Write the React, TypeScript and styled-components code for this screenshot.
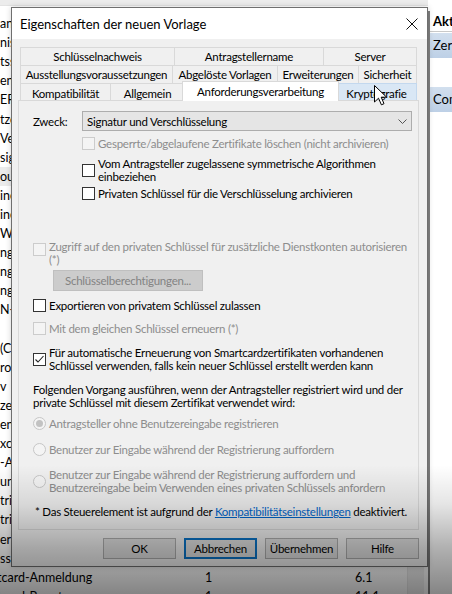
import React from "react";
import styled, { createGlobalStyle } from "styled-components";

const UI_FONT = `Lato, "Liberation Sans", Arial, sans-serif`;

const GlobalStyle = createGlobalStyle`
  * { box-sizing: border-box; }
  html, body { margin: 0; padding: 0; background: #fff; }
  body { font-family: ${UI_FONT}; }
`;

const templates = [
  "an", "nis", "tss", "ent", "EF", "tze", "Ver", "sig", "out", "ine",
  "ine", "Wie", "ng", "ng", "ng", "N-", "", "(C", "ro", "v",
  "ze", "en", "xc", "-A", "un", "tri", "tri", "er (", "ss",
];

const tabRows = [
  [
    { label: "Schlüsselnachweis", width: 155 },
    { label: "Antragstellername", width: 150 },
    { label: "Server", width: 94 },
  ],
  [
    { label: "Ausstellungsvoraussetzungen", width: 153 },
    { label: "Abgelöste Vorlagen", width: 106 },
    { label: "Erweiterungen", width: 82 },
    { label: "Sicherheit", width: 59 },
  ],
];

const App = () => {
  return (
    <>
      <GlobalStyle />
      <Desktop>
        <ListPane>
          <ListHeader />
          <ListBody>
            <Rows>
              {templates.map((name, index) => (
                <ListRow key={index} $hover={index === 8}>
                  <NameCell>{name}</NameCell>
                </ListRow>
              ))}
              <ListRow>
                <NameCell $indent={-3}>tcard-Anmeldung</NameCell>
                <VersionCell>1</VersionCell>
                <Cell>6.1</Cell>
              </ListRow>
              <ListRow>
                <NameCell $indent={-3}>tcard-Benutzer</NameCell>
                <VersionCell>1</VersionCell>
                <Cell>11.1</Cell>
              </ListRow>
            </Rows>
            <Scrollbar />
          </ListBody>
        </ListPane>

        <ActionPane>
          <ActionHeader>Aktionen</ActionHeader>
          <ActionGroup $mt={1}>Zertifikatvorlagen</ActionGroup>
          <ActionGroup $mt={29}>Computer</ActionGroup>
        </ActionPane>

        <Dialog>
          <TitleBar>
            <Title>Eigenschaften der neuen Vorlage</Title>
            <CloseButton>
              <svg width="12" height="12" viewBox="0 0 12 12">
                <path d="M0.5 0.5 L11.5 11.5 M11.5 0.5 L0.5 11.5" stroke="#111" strokeWidth="1" />
              </svg>
            </CloseButton>
          </TitleBar>

          <DialogBody>
            <TabStrip>
              {tabRows.map((row, r) => (
                <TabRow key={r} $first={r === 0}>
                  {row.map((tab, i) => (
                    <Tab key={tab.label} $width={tab.width} $first={i === 0}>
                      {tab.label}
                    </Tab>
                  ))}
                </TabRow>
              ))}
              <TabRow $last>
                <Tab $width={91} $first $bottom>
                  Kompatibilität
                </Tab>
                <Tab $width={75} $bottom>
                  Allgemein
                </Tab>
                <ActiveTab>Anforderungsverarbeitung</ActiveTab>
                <Tab $width={81} $bottom $hover>
                  Kryptografie
                </Tab>
              </TabRow>
            </TabStrip>

            <TabPage>
              <FieldRow>
                <FieldLabel>Zweck:</FieldLabel>
                <Select>
                  <span>Signatur und Verschlüsselung</span>
                  <svg width="9" height="5" viewBox="0 0 9 5">
                    <polyline points="0.5,0.5 4.5,4.5 8.5,0.5" fill="none" stroke="#555" strokeWidth="1" />
                  </svg>
                </Select>
              </FieldRow>

              <Option $mt={6} $indent={49} $disabled>
                <Box $disabled />
                <Label>Gesperrte/abgelaufene Zertifikate löschen (nicht archivieren)</Label>
              </Option>
              <Option $mt={7} $indent={49}>
                <Box />
                <Label>
                  Vom Antragsteller zugelassene symmetrische Algorithmen
                  <br />
                  einbeziehen
                </Label>
              </Option>
              <Option $mt={4} $indent={49}>
                <Box />
                <Label>Privaten Schlüssel für die Verschlüsselung archivieren</Label>
              </Option>

              <Option $mt={40} $disabled $top>
                <Box $disabled $top />
                <Label>
                  Zugriff auf den privaten Schlüssel für zusätzliche Dienstkonten autorisieren
                  <br />
                  (*)
                </Label>
              </Option>
              <KeyButton disabled>Schlüsselberechtigungen...</KeyButton>

              <Option $mt={8}>
                <Box />
                <Label>Exportieren von privatem Schlüssel zulassen</Label>
              </Option>
              <Option $mt={10} $disabled>
                <Box $disabled />
                <Label>Mit dem gleichen Schlüssel erneuern (*)</Label>
              </Option>
              <Option $mt={11}>
                <Box>
                  <svg width="11" height="11" viewBox="0 0 11 11">
                    <polyline points="1.5,5.5 4,8 9.5,2" fill="none" stroke="#222" strokeWidth="1.1" />
                  </svg>
                </Box>
                <Label>
                  Für automatische Erneuerung von Smartcardzertifikaten vorhandenen
                  <br />
                  Schlüssel verwenden, falls kein neuer Schlüssel erstellt werden kann
                </Label>
              </Option>

              <Paragraph>
                Folgenden Vorgang ausführen, wenn der Antragsteller registriert wird und der
                <br />
                private Schlüssel mit diesem Zertifikat verwendet wird:
              </Paragraph>

              <Option $mt={8} $disabled>
                <Radio $checked />
                <Label>Antragsteller ohne Benutzereingabe registrieren</Label>
              </Option>
              <Option $mt={13} $disabled>
                <Radio />
                <Label>Benutzer zur Eingabe während der Registrierung auffordern</Label>
              </Option>
              <Option $mt={12} $disabled>
                <Radio />
                <Label>
                  Benutzer zur Eingabe während der Registrierung auffordern und
                  <br />
                  Benutzereingabe beim Verwenden eines privaten Schlüssels anfordern
                </Label>
              </Option>

              <Footnote>
                * Das Steuerelement ist aufgrund der <Link>Kompatibilitätseinstellungen</Link>{" "}
                deaktiviert.
              </Footnote>
            </TabPage>

            <ButtonBar>
              <DialogButton>OK</DialogButton>
              <DialogButton $default>Abbrechen</DialogButton>
              <DialogButton>Übernehmen</DialogButton>
              <DialogButton>Hilfe</DialogButton>
            </ButtonBar>
          </DialogBody>

          <Cursor width="14" height="21" viewBox="0 0 14 21">
            <path
              d="M0.5 0.5 L0.5 17 L4.5 13.2 L7.4 19.8 L10 18.7 L7.2 12.2 L12.6 12.2 Z"
              fill="#fff"
              stroke="#000"
              strokeWidth="1"
              strokeLinejoin="round"
            />
          </Cursor>
        </Dialog>

        <VideoShade />
      </Desktop>
    </>
  );
};

export default App;

const Desktop = styled.div`
  position: relative;
  display: flex;
  width: 452px;
  height: 594px;
  overflow: hidden;
  background: #fff;
  font-family: ${UI_FONT};
`;

const ListPane = styled.div`
  display: flex;
  flex-direction: column;
  width: 428px;
  flex: none;
`;

const ListHeader = styled.div`
  height: 6px;
  flex: none;
  background: #ececec;
  border-bottom: 1px solid #e3e3e3;
`;

const ListBody = styled.div`
  display: flex;
  flex: 1;
  padding-top: 8px;
`;

const Rows = styled.div`
  flex: 1;
  overflow: hidden;
`;

const ListRow = styled.div<{ $hover?: boolean }>`
  display: flex;
  align-items: center;
  height: 19.1px;
  font-size: 12.5px;
  color: #000;
  white-space: nowrap;
  background: ${(props) => (props.$hover ? "#ebebeb" : "transparent")};
`;

const NameCell = styled.div<{ $indent?: number }>`
  width: 205px;
  flex: none;
  overflow: hidden;
  text-indent: ${(props) => props.$indent ?? 0}px;
`;

const VersionCell = styled.div`
  width: 150px;
  flex: none;
`;

const Cell = styled.div`
  flex: 1;
`;

const Scrollbar = styled.div`
  width: 17px;
  margin-right: 4px;
  background: #f0f0f0;
  border-left: 1px solid #e6e6e6;
`;

const ActionPane = styled.div`
  display: flex;
  flex-direction: column;
  flex: 1;
  margin-top: 11px;
  border-left: 2px solid #7f7f7f;
  background: #fff;
  overflow: hidden;
  white-space: nowrap;
  font-size: 13px;
`;

const ActionHeader = styled.div`
  height: 21px;
  line-height: 21px;
  padding-left: 3px;
  font-weight: bold;
  border-bottom: 1px solid #c9c9c9;
`;

const ActionGroup = styled.div<{ $mt: number }>`
  height: 25px;
  line-height: 25px;
  margin-top: ${(props) => props.$mt}px;
  padding-left: 3px;
  background: linear-gradient(#d2dfee, #bdd0e6);
`;

const Dialog = styled.div`
  position: absolute;
  left: 11px;
  top: 7px;
  width: 417px;
  display: flex;
  flex-direction: column;
  border: 1px solid #6f6f6f;
  background: #f0f0f0;
  box-shadow: 0 0 6px rgba(0, 0, 0, 0.18);
`;

const TitleBar = styled.div`
  display: flex;
  align-items: center;
  justify-content: space-between;
  height: 31px;
  padding-left: 8px;
  background: #fff;
`;

const Title = styled.div`
  font-size: 13px;
  color: #000;
`;

const CloseButton = styled.div`
  display: flex;
  align-items: center;
  justify-content: center;
  width: 30px;
  height: 31px;
`;

const DialogBody = styled.div`
  display: flex;
  flex-direction: column;
  padding: 8px 8px 7px 6px;
  font-size: 11.5px;
  letter-spacing: -0.25px;
  color: #000;
`;

const TabStrip = styled.div`
  display: flex;
  flex-direction: column;
  padding: 0 2px;
`;

const TabRow = styled.div<{ $first?: boolean; $last?: boolean }>`
  display: flex;
  align-items: flex-end;
  margin-top: ${(props) => (props.$first ? 0 : -1)}px;
  height: ${(props) => (props.$last ? 17 : 19)}px;
`;

const Tab = styled.div<{ $width: number; $first?: boolean; $bottom?: boolean; $hover?: boolean }>`
  display: flex;
  align-items: center;
  justify-content: center;
  width: ${(props) => props.$width}px;
  height: ${(props) => (props.$bottom ? 17 : 19)}px;
  flex: none;
  margin-left: ${(props) => (props.$first ? 0 : -1)}px;
  padding-top: ${(props) => (props.$bottom ? 2 : 0)}px;
  border: 1px solid ${(props) => (props.$hover ? "#c3d8ee" : "#d9d9d9")};
  border-bottom: ${(props) => (props.$bottom ? "none" : undefined)};
  background: ${(props) => (props.$hover ? "#d9e7f5" : "#f0f0f0")};
  white-space: nowrap;
`;

const ActiveTab = styled.div`
  position: relative;
  z-index: 1;
  display: flex;
  align-items: center;
  justify-content: center;
  width: 157px;
  height: 20px;
  flex: none;
  margin: 0 -2px -1px -3px;
  padding-bottom: 1px;
  border: 1px solid #d9d9d9;
  border-bottom: none;
  background: #fff;
  white-space: nowrap;
`;

const TabPage = styled.div`
  display: flex;
  flex-direction: column;
  height: 430px;
  padding: 10px 6px 0 14px;
  border: 1px solid #d9d9d9;
  background: #f0f0f0;
  line-height: 13px;
`;

const FieldRow = styled.div`
  display: flex;
  align-items: center;
  height: 20px;
`;

const FieldLabel = styled.div`
  width: 49px;
  flex: none;
`;

const Select = styled.div`
  display: flex;
  align-items: center;
  justify-content: space-between;
  flex: 1;
  height: 20px;
  padding: 0 4px 0 4px;
  border: 1px solid #adadad;
  background: #e5e5e5;
`;

const Option = styled.div<{ $mt: number; $indent?: number; $disabled?: boolean; $top?: boolean }>`
  display: flex;
  align-items: ${(props) => (props.$top ? "flex-start" : "center")};
  margin-top: ${(props) => props.$mt}px;
  margin-left: ${(props) => props.$indent ?? 0}px;
  color: ${(props) => (props.$disabled ? "#8d8d8d" : "#000")};
  white-space: nowrap;
`;

const Box = styled.div<{ $disabled?: boolean; $top?: boolean }>`
  display: flex;
  align-items: center;
  justify-content: center;
  width: 13px;
  height: 13px;
  flex: none;
  margin-right: 3px;
  margin-top: ${(props) => (props.$top ? 3 : 0)}px;
  border: 1px solid ${(props) => (props.$disabled ? "#cccccc" : "#333333")};
  background: ${(props) => (props.$disabled ? "#f4f4f4" : "#fff")};
`;

const Radio = styled.div<{ $checked?: boolean }>`
  display: flex;
  align-items: center;
  justify-content: center;
  width: 13px;
  height: 13px;
  flex: none;
  margin-right: 3px;
  border: 1px solid #c6c6c6;
  border-radius: 50%;
  background: #f4f4f4;

  &::after {
    content: "";
    display: ${(props) => (props.$checked ? "block" : "none")};
    width: 7px;
    height: 7px;
    border-radius: 50%;
    background: #c2c2c2;
  }
`;

const Label = styled.div``;

const KeyButton = styled.button`
  width: 150px;
  height: 21px;
  margin: 4px 0 0 20px;
  padding: 0;
  border: 1px solid #bfbfbf;
  background: #cccccc;
  color: #838383;
  font-family: ${UI_FONT};
  font-size: 11.5px;
  letter-spacing: -0.25px;
`;

const Paragraph = styled.div`
  margin-top: 11px;
  white-space: nowrap;
`;

const Footnote = styled.div`
  margin-top: 11px;
  padding-left: 2px;
  white-space: nowrap;
`;

const Link = styled.span`
  color: #0066cc;
  text-decoration: underline;
`;

const ButtonBar = styled.div`
  display: flex;
  justify-content: flex-end;
  gap: 8px;
  margin-top: 8px;
`;

const DialogButton = styled.button<{ $default?: boolean }>`
  width: 73px;
  height: 21px;
  padding: 0;
  border: ${(props) => (props.$default ? "2px solid #0a73c6" : "1px solid #adadad")};
  background: #e1e1e1;
  color: #000;
  font-family: ${UI_FONT};
  font-size: 11.5px;
  letter-spacing: -0.25px;
`;

const Cursor = styled.svg`
  position: absolute;
  left: 362px;
  top: 77px;
  z-index: 2;
`;

const VideoShade = styled.div`
  position: absolute;
  left: 0;
  right: 0;
  top: 465px;
  height: 129px;
  z-index: 3;
  pointer-events: none;
  background: linear-gradient(
    to bottom,
    rgba(0, 0, 0, 0) 0px,
    rgba(0, 0, 0, 0.1) 39px,
    rgba(0, 0, 0, 0.31) 83px,
    rgba(0, 0, 0, 0.48) 129px
  );
`;
